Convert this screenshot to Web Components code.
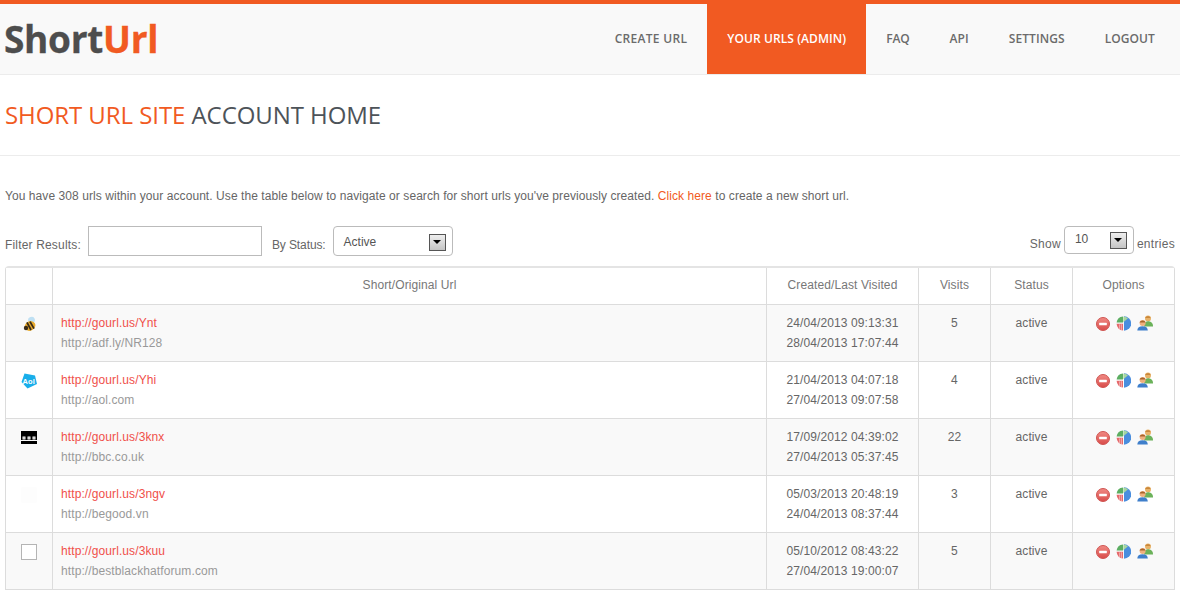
<!DOCTYPE html>
<html lang="en">
<head>
<meta charset="utf-8">
<title>ShortUrl</title>
<style>
    html, body { margin: 0; padding: 0; height: 590px; overflow: hidden; background: #fff; }
    body { font-family: "Liberation Sans", Arial, sans-serif; font-size: 12px; color: #666; }
</style>
</head>
<body>
<site-header>
    <nav-link style="letter-spacing: .29px">CREATE URL</nav-link>
    <nav-link active>YOUR URLS (ADMIN)</nav-link>
    <nav-link style="letter-spacing: -.2px">FAQ</nav-link>
    <nav-link>API</nav-link>
    <nav-link>SETTINGS</nav-link>
    <nav-link>LOGOUT</nav-link>
</site-header>
<page-title accent="SHORT URL SITE" rest="ACCOUNT HOME"></page-title>
<intro-text></intro-text>
<url-toolbar></url-toolbar>
<url-table>
    <url-row short="http://gourl.us/Ynt" original="http://adf.ly/NR128" created="24/04/2013 09:13:31" visited="28/04/2013 17:07:44" visits="5" favicon="bee" shaded></url-row>
    <url-row short="http://gourl.us/Yhi" original="http://aol.com" created="21/04/2013 04:07:18" visited="27/04/2013 09:07:58" visits="4" favicon="aol"></url-row>
    <url-row short="http://gourl.us/3knx" original="http://bbc.co.uk" created="17/09/2012 04:39:02" visited="27/04/2013 05:37:45" visits="22" favicon="bbc" shaded></url-row>
    <url-row short="http://gourl.us/3ngv" original="http://begood.vn" created="05/03/2013 20:48:19" visited="24/04/2013 08:37:44" visits="3" favicon="blank"></url-row>
    <url-row short="http://gourl.us/3kuu" original="http://bestblackhatforum.com" created="05/10/2012 08:43:22" visited="27/04/2013 19:00:07" visits="5" favicon="box" shaded></url-row>
</url-table>

<script>
// shadow root helper
function shadow(el, html) {
    el.attachShadow({ mode: 'open' }).innerHTML = html;
}

class SiteHeader extends HTMLElement {
    connectedCallback() {
        shadow(this, `
            <style>
                :host { display: flex; justify-content: space-between; height: 70px; border-top: 4px solid #f15a22; border-bottom: 1px solid #ececec; background: #f9f9f9; }
                .logo { font: 700 37px/69px "Open Sans", sans-serif; letter-spacing: -.3px; color: #4d4d4d; padding-left: 4px; -webkit-text-stroke: .3px currentColor; }
                .logo span { color: #f15a22; }
                nav { display: flex; padding-right: 5px; }
            </style>
            <div class="logo">Short<span>Url</span></div>
            <nav><slot></slot></nav>
        `);
    }
}

class NavLink extends HTMLElement {
    connectedCallback() {
        shadow(this, `
            <style>
                :host { display: block; height: 70px; padding: 0 20px; font: 600 12px/69px "Open Sans", sans-serif; letter-spacing: .09px; color: #6b6b6b; }
                :host([active]) { background: #f15a22; color: #fff; }
            </style>
            <slot></slot>
        `);
    }
}

class PageTitle extends HTMLElement {
    connectedCallback() {
        shadow(this, `
            <style>
                :host { display: block; height: 80px; border-bottom: 1px solid #ececec; padding-left: 5px; font: 400 24px/79px "Open Sans", sans-serif; letter-spacing: -.07px; color: #4d5359; }
                span { color: #f15a22; }
            </style>
            <span>${this.getAttribute('accent')}</span> ${this.getAttribute('rest')}
        `);
    }
}

class IntroText extends HTMLElement {
    connectedCallback() {
        shadow(this, `
            <style>
                :host { display: block; padding: 33px 0 0 5px; height: 37px; font-size: 12px; line-height: 14px; letter-spacing: .07px; color: #666; }
                a { color: #f15a22; text-decoration: none; }
            </style>
            You have 308 urls within your account. Use the table below to navigate or search for short urls you've previously created. <a href="#">Click here</a> to create a new short url.
        `);
    }
}

class FakeSelect extends HTMLElement {
    connectedCallback() {
        shadow(this, `
            <style>
                :host { display: block; box-sizing: border-box; height: var(--select-h, 28px); border: 1px solid #bbb; border-radius: 4px; background: #fff; position: relative; font-size: 12px; line-height: var(--select-line, 25px); color: #555; padding-left: 10px; }
                .arrow { position: absolute; top: var(--arrow-top, 5px); right: 6px; box-sizing: border-box; width: 17px; height: 17px; border: 1px solid #555; background: linear-gradient(#eee, #c4c4c4); }
                .arrow::after { content: ""; position: absolute; left: 3px; top: 5px; border: 4px solid transparent; border-top: 4px solid #000; border-bottom: 0; }
            </style>
            <slot></slot><span class="arrow"></span>
        `);
    }
}

class UrlToolbar extends HTMLElement {
    connectedCallback() {
        shadow(this, `
            <style>
                :host { display: flex; align-items: flex-start; justify-content: space-between; height: 40px; padding: 0 5px; font-size: 12px; color: #666; }
                .group { display: flex; align-items: flex-start; }
                label { padding-top: 12px; line-height: 14px; letter-spacing: .17px; }
                label.tight { letter-spacing: -.1px; }
                label.show { padding-top: 11px; letter-spacing: .3px; }
                .filter { box-sizing: border-box; width: 174px; height: 30px; margin: 0 10px 0 7px; border: 1px solid #bbb; background: #fff; }
                fake-select.status { width: 120px; margin-left: 7px; --select-h: 30px; --select-line: 30px; --arrow-top: 7px; }
                fake-select.length { width: 70px; margin: 0 3px; }
            </style>
            <div class="group">
                <label>Filter Results:</label>
                <div class="filter"></div>
                <label class="tight">By Status:</label>
                <fake-select class="status">Active</fake-select>
            </div>
            <div class="group">
                <label class="show">Show</label>
                <fake-select class="length">10</fake-select>
                <label class="show">entries</label>
            </div>
        `);
    }
}

class UrlTable extends HTMLElement {
    connectedCallback() {
        shadow(this, `
            <style>
                :host { display: block; box-sizing: border-box; width: 1170px; margin-left: 5px; border: 1px solid #dcdcdc; border-top-width: 2px; border-top-color: #e4e4e4; border-radius: 4px 4px 0 0; letter-spacing: .1px; }
                .head { display: grid; grid-template-columns: 46px 714px 152px 72px 82px 1fr; height: 36px; border-bottom: 1px solid #dcdcdc; background: #fff; font-size: 12px; line-height: 35px; text-align: center; color: #777; }
                .head div + div { border-left: 1px solid #dcdcdc; }
            </style>
            <div class="head">
                <div></div><div>Short/Original Url</div><div>Created/Last Visited</div><div>Visits</div><div>Status</div><div>Options</div>
            </div>
            <slot></slot>
        `);
    }
}

const FAVICONS = {
    bee: `<svg width="16" height="16" viewBox="0 0 16 16">
            <ellipse cx="10.5" cy="4" rx="3.4" ry="3.2" fill="#bfe0f3" transform="rotate(-20 10.5 4)"/>
            <ellipse cx="9" cy="10" rx="5.6" ry="4.6" fill="#e8ab2e" transform="rotate(-30 9 10)"/>
            <path d="M6 6.4l4 7.6M9 5.6l4 7" stroke="#3a2c18" stroke-width="1.8" fill="none"/>
            <circle cx="5" cy="12" r="2.2" fill="#3a2c18"/>
          </svg>`,
    aol: `<svg width="16" height="16" viewBox="0 0 16 16">
            <path d="M3.5 .5L14 2.5 16 11 6.5 15.5 .5 9z" fill="#19aeea"/>
            <text x="1.6" y="10.6" font-family="Liberation Sans, sans-serif" font-size="7.4" font-weight="700" fill="#fff">Aol</text>
          </svg>`,
    bbc: `<svg width="16" height="16" viewBox="0 0 16 16">
            <rect y="1" width="16" height="9" fill="#000"/>
            <rect y="11" width="16" height="3" fill="#000"/>
            <path d="M1.5 6.5h3v3h-3zM6.5 6.5h3v3h-3zM11.5 6.5h3v3h-3z" fill="#fff"/>
            <path d="M2.5 7.5h1v1h-1zM7.5 7.5h1v1h-1zM12.5 7.5h1v1h-1z" fill="#666"/>
          </svg>`,
    blank: `<svg width="16" height="16" viewBox="0 0 16 16"><rect width="16" height="16" rx="2" fill="#fdfdfd"/></svg>`,
    box: `<svg width="16" height="16" viewBox="0 0 16 16"><rect x=".5" y=".5" width="15" height="15" fill="#fff" stroke="#b4b4b4"/></svg>`
};

class OptionIcons extends HTMLElement {
    connectedCallback() {
        shadow(this, `
            <style>
                :host { display: flex; align-items: flex-end; gap: 6px; height: 16px; padding: 10px 0 0 23px; }
                svg { display: block; }
            </style>
            <svg width="14" height="14" viewBox="0 0 14 14">
                <defs><linearGradient id="stop" x1="0" y1="0" x2="0" y2="1"><stop offset="0" stop-color="#f08a84"/><stop offset="1" stop-color="#d94c4a"/></linearGradient></defs>
                <circle cx="7" cy="7" r="6.5" fill="url(#stop)" stroke="#cf5552"/>
                <rect x="3.2" y="5.8" width="7.6" height="2.4" rx=".5" fill="#fff"/>
            </svg>
            <svg width="15" height="15" viewBox="0 0 15 15">
                <path d="M8 7.5V.3A7 7 0 0 1 8 14.7z" fill="#4a8ede"/>
                <path d="M7 6.6V.4A7 7 0 0 0 .6 6.6z" fill="#5cae62"/>
                <path d="M7.4 6.2V.4A7 7 0 0 1 12 2.2z" fill="#a7d6a0"/>
                <path d="M7 7.8H.6A7 7 0 0 0 7 14.6z" fill="#e66a6c"/>
                <path d="M3.6 8.4v5M5.4 8.2v6" stroke="#f4c9c9" stroke-width=".7"/>
            </svg>
            <svg width="17" height="16" viewBox="0 0 17 16">
                <circle cx="11" cy="3.4" r="3" fill="#e8b268"/>
                <path d="M8.2 3c.5-2 4.6-2.6 5.4 0z" fill="#c9873b"/>
                <path d="M7 11.5c0-3.6 2-5.3 4-5.3s5 1.4 5 4.6v.7z" fill="#6bb25a"/>
                <circle cx="5.6" cy="8" r="3" fill="#efb07e"/>
                <path d="M2.6 7.6c.4-2.6 5.4-3 6 0z" fill="#a9652c"/>
                <path d="M.3 15.6c0-3 2-4.4 5.3-4.4s5.2 1.4 5.2 4.4z" fill="#3f7fcb"/>
            </svg>
        `);
    }
}

class UrlRow extends HTMLElement {
    connectedCallback() {
        const a = (n) => this.getAttribute(n);
        shadow(this, `
            <style>
                :host { display: grid; grid-template-columns: 46px 714px 152px 72px 82px 1fr; height: 56px; border-bottom: 1px solid #dcdcdc; font-size: 12px; color: #666; background: #fff; }
                :host([shaded]) { background: #f9f9f9; }
                .cell + .cell { border-left: 1px solid #dcdcdc; }
                .cell { text-align: center; padding-top: 8px; line-height: 20px; }
                .icon { padding-top: 11px; display: flex; justify-content: center; align-items: flex-start; }
                .url { text-align: left; padding-left: 8px; color: #999; }
                .url a { display: block; color: #f0504a; text-decoration: none; }
                .option { padding-top: 0; }
            </style>
            <div class="cell icon">${FAVICONS[a('favicon')]}</div>
            <div class="cell url"><a href="#">${a('short')}</a>${a('original')}</div>
            <div class="cell">${a('created')}<br>${a('visited')}</div>
            <div class="cell">${a('visits')}</div>
            <div class="cell">active</div>
            <div class="cell option"><option-icons></option-icons></div>
        `);
    }
}

customElements.define('site-header', SiteHeader);
customElements.define('nav-link', NavLink);
customElements.define('page-title', PageTitle);
customElements.define('intro-text', IntroText);
customElements.define('fake-select', FakeSelect);
customElements.define('url-toolbar', UrlToolbar);
customElements.define('url-table', UrlTable);
customElements.define('option-icons', OptionIcons);
customElements.define('url-row', UrlRow);
</script>
</body>
</html>
